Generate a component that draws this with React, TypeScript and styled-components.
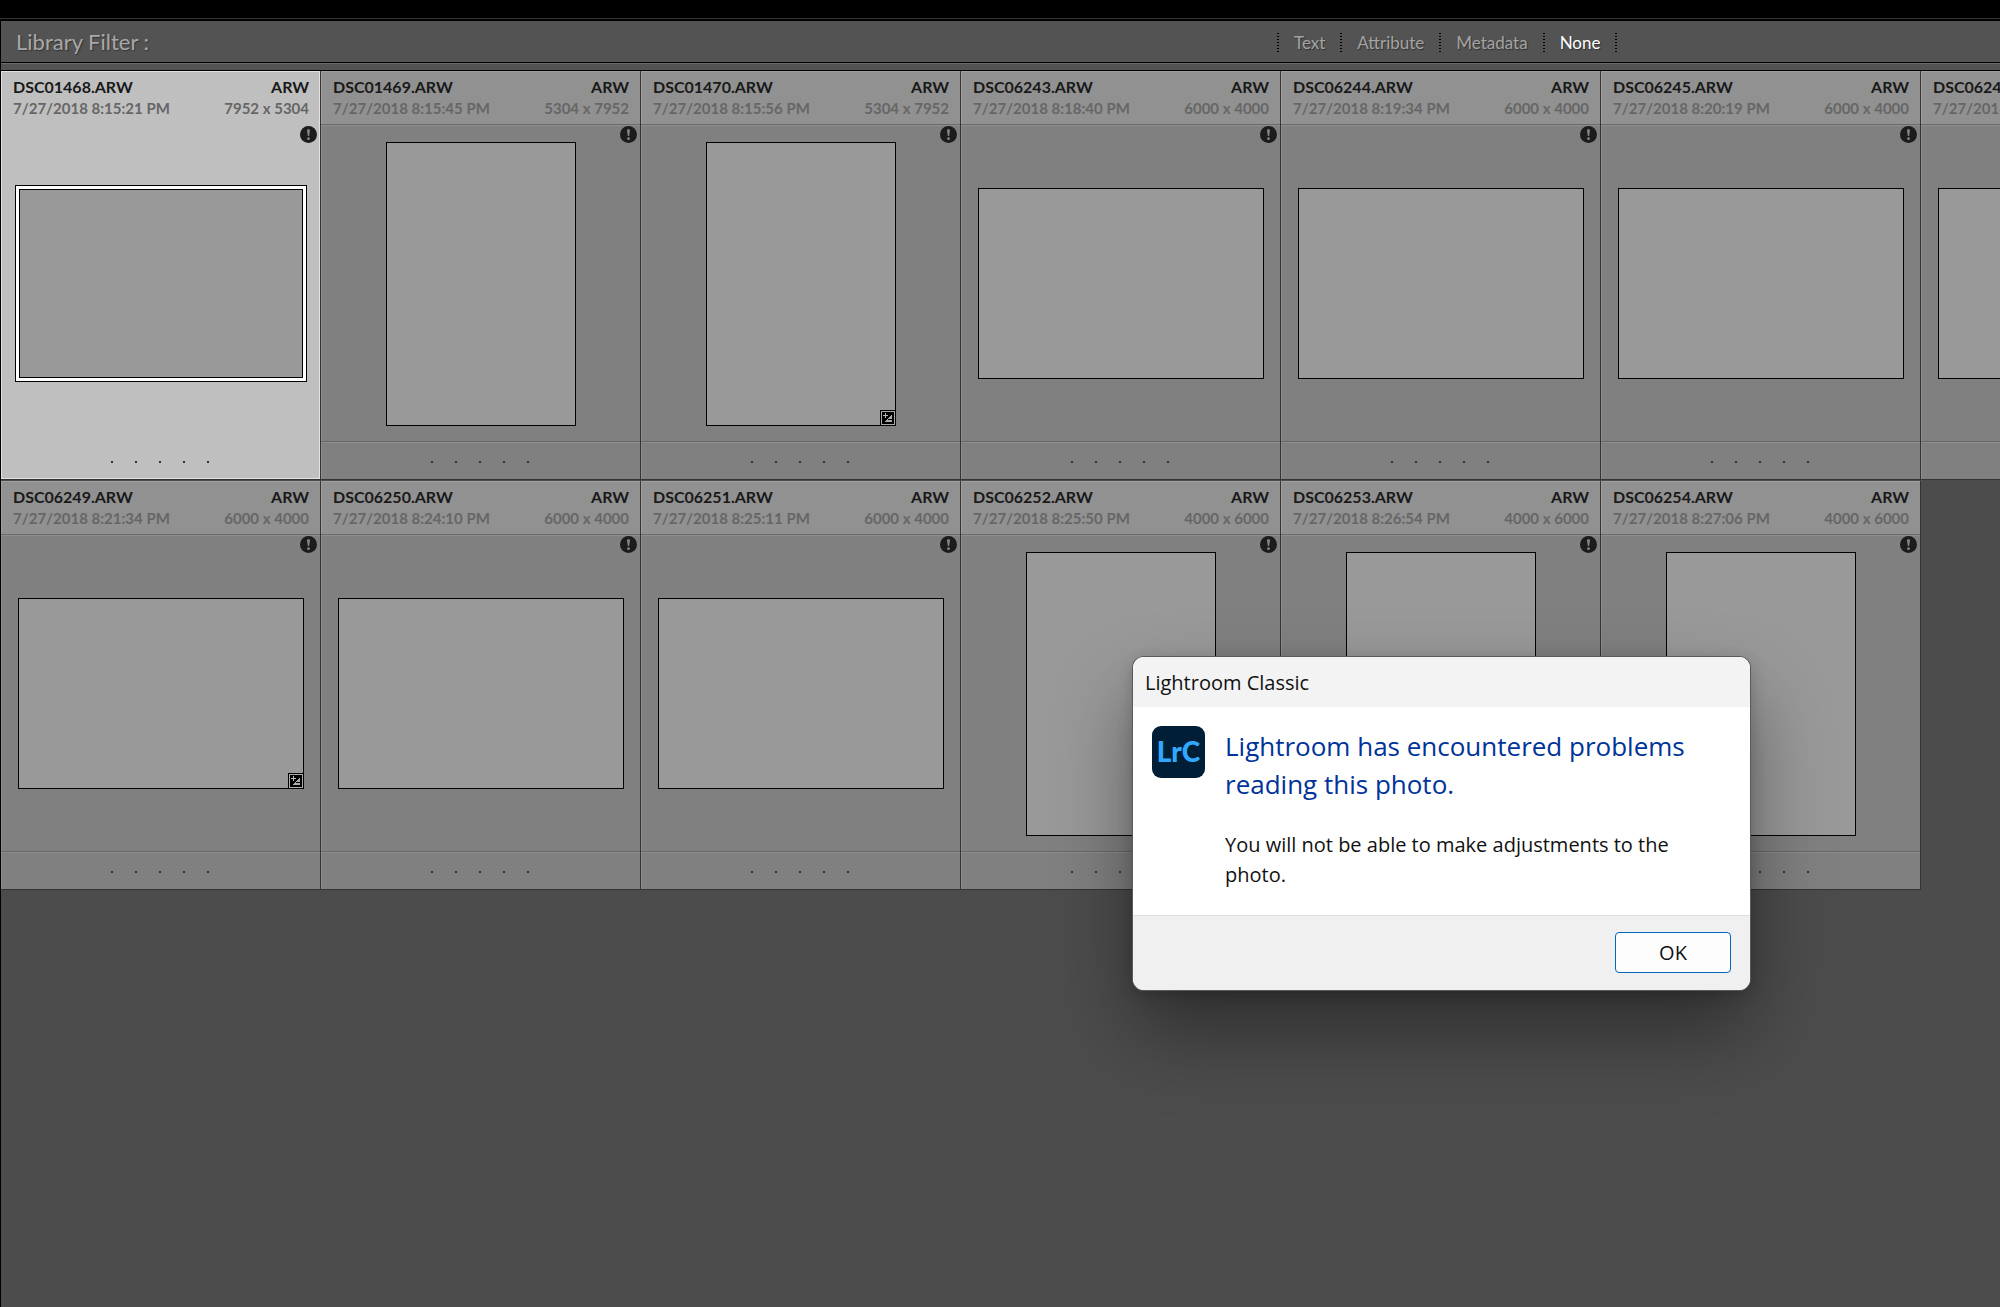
import React from "react";
import styled, { createGlobalStyle, css } from "styled-components";

const ui = `Lato, "Open Sans", sans-serif`;
const system = `"Open Sans", "Noto Sans", sans-serif`;

const GlobalStyle = createGlobalStyle`
  *, *::before, *::after { box-sizing: border-box; }
  html, body { margin: 0; background: #4c4c4c; }
  body { overflow: hidden; font-family: ${ui}; }
  h1, h2, p { margin: 0; font-weight: 400; }
`;

const Page = styled.div`
  position: relative;
  display: flex;
  flex-direction: column;
  min-height: 100vh;
  overflow: hidden;
`;

const TopStrip = styled.div`
  height: 21px;
  background: #000;
  border-bottom: 2px solid #000;
  box-shadow: inset 0 -1px 0 #333;
`;

const Workspace = styled.main`
  flex: 1;
  border-left: 1px solid #000;
`;

const FilterBar = styled.header`
  display: grid;
  grid-template-columns: 30fr 17fr;
  align-items: center;
  height: 42px;
  background: #535353;
  border-bottom: 1px solid #000;
`;

const FilterTitle = styled.h1`
  padding-left: 15px;
  font-size: 22px;
  line-height: 28px;
  color: #a8a8a8;
  text-shadow: 1px 1px 1px #333;
`;

const FilterTabs = styled.nav`
  display: flex;
  align-items: center;
  gap: 15px;
  padding-top: 2px;
`;

const Separator = styled.span`
  width: 2px;
  height: 19px;
  background: repeating-linear-gradient(#000 0 1px, transparent 1px 3px);
`;

const FilterTab = styled.button<{ $active?: boolean }>`
  padding: 0;
  border: 0;
  background: none;
  font-family: ${ui};
  font-size: 17px;
  line-height: 22px;
  color: ${(p) => (p.$active ? "#fff" : "#a3a3a3")};
  text-shadow: 1px 1px 1px #333;
`;

const BarEdge = styled.div`
  height: 8px;
  background: #535353;
  border-top: 1px solid #6b6b6b;
  border-bottom: 1px solid #000;
`;

const Grid = styled.section`
  display: grid;
  grid-template-columns: repeat(7, 320px);
  row-gap: 1px;
`;

const Cell = styled.article<{ $selected?: boolean }>`
  display: flex;
  flex-direction: column;
  height: 409px;
  background: #808080;
  border-right: 1px solid #333;
  border-bottom: 1px solid #333;
  box-shadow: inset 1px 0 0 #8e8e8e;
  ${(p) =>
    p.$selected &&
    css`
      background: #bfbfbf;
      box-shadow: inset 0 0 0 1px #e6e0e2;
    `}
`;

const CellHead = styled.div<{ $selected?: boolean }>`
  height: 54px;
  padding: 5px 11px 0 12px;
  border-bottom: 1px solid ${(p) => (p.$selected ? "transparent" : "#6a6a6a")};
  ${(p) =>
    !p.$selected &&
    css`
      background: #919191;
      box-shadow: inset 1px 1px 0 #9f9f9f;
    `}
`;

const Line = styled.div<{ $muted?: boolean }>`
  display: flex;
  justify-content: space-between;
  font-weight: 700;
  font-size: ${(p) => (p.$muted ? 15 : 16)}px;
  line-height: ${(p) => (p.$muted ? 22 : 21)}px;
  white-space: nowrap;
  color: ${(p) => (p.$muted ? "#666" : "#191919")};
`;

const CellBody = styled.div<{ $selected?: boolean }>`
  position: relative;
  flex: 1;
  display: flex;
  align-items: center;
  justify-content: center;
  padding-left: 1px;
  border-top: 1px solid ${(p) => (p.$selected ? "transparent" : "#8e8e8e")};
`;

const Thumb = styled.div<{ $portrait?: boolean; $selected?: boolean }>`
  position: relative;
  width: ${(p) => (p.$portrait ? 190 : 286)}px;
  height: ${(p) => (p.$portrait ? 284 : 191)}px;
  background: #999;
  border: 1px solid #000;
  ${(p) =>
    p.$selected &&
    css`
      border-color: #fff;
      box-shadow: inset 0 0 0 1px #000, 0 0 0 2px #fff, 0 0 0 3px #000;
    `}
`;

const AlertBadge = styled.svg`
  position: absolute;
  top: 0;
  right: 3px;
  width: 17px;
  height: 17px;
`;

const AdjustBadge = styled.svg`
  position: absolute;
  right: -1px;
  bottom: -1px;
  width: 16px;
  height: 16px;
`;

const CellFoot = styled.div<{ $selected?: boolean }>`
  display: flex;
  align-items: center;
  justify-content: center;
  gap: 22px;
  height: 38px;
  padding: 3px 2px 0 0;
  border-top: 1px solid ${(p) => (p.$selected ? "transparent" : "#686868")};
  box-shadow: ${(p) => (p.$selected ? "none" : "inset 0 1px 0 #8e8e8e")};
`;

const RatingDot = styled.span`
  width: 2px;
  height: 2px;
  background: #333;
`;

const Dialog = styled.div`
  position: absolute;
  top: 657px;
  left: 1133px;
  width: 617px;
  overflow: hidden;
  border-radius: 11px;
  background: #fff;
  box-shadow: 0 0 0 1px #5a5a5a, 0 4px 16px rgba(0, 0, 0, 0.2), 0 40px 80px rgba(0, 0, 0, 0.4);
  font-family: ${system};
  color: #111;
`;

const DialogTitle = styled.div`
  padding: 11px 12px 9px;
  background: #f3f3f3;
  font-size: 20px;
  line-height: 30px;
`;

const DialogContent = styled.div`
  display: flex;
  align-items: flex-start;
  gap: 20px;
  padding: 19px 40px 25px 19px;
`;

const DialogMessage = styled.div`
  padding-top: 1px;
`;

const AppIcon = styled.div`
  flex: none;
  width: 53px;
  height: 52px;
  border-radius: 9px;
  background: #001e36;
  color: #31a8ff;
  font-family: Lato, sans-serif;
  font-weight: 900;
  font-size: 28px;
  line-height: 50px;
  text-align: center;
`;

const DialogHeading = styled.h2`
  margin-bottom: 27px;
  font-size: 26px;
  line-height: 38px;
  color: #003399;
`;

const DialogText = styled.p`
  font-size: 20px;
  line-height: 30px;
`;

const DialogFooter = styled.div`
  display: flex;
  justify-content: flex-end;
  padding: 16px 19px 17px;
  background: #f0f0f0;
  border-top: 1px solid #dfdfdf;
`;

const OkButton = styled.button`
  width: 116px;
  height: 41px;
  padding: 0;
  border: 1px solid #0067c0;
  border-radius: 4px;
  background: #fdfdfd;
  font-family: ${system};
  font-size: 20px;
  color: #111;
`;

type Photo = {
  name: string;
  time: string;
  size: string;
  portrait?: boolean;
  adjusted?: boolean;
  selected?: boolean;
};

const photos: Photo[] = [
  { name: "DSC01468", time: "8:15:21", size: "7952 x 5304", selected: true },
  { name: "DSC01469", time: "8:15:45", size: "5304 x 7952", portrait: true },
  { name: "DSC01470", time: "8:15:56", size: "5304 x 7952", portrait: true, adjusted: true },
  { name: "DSC06243", time: "8:18:40", size: "6000 x 4000" },
  { name: "DSC06244", time: "8:19:34", size: "6000 x 4000" },
  { name: "DSC06245", time: "8:20:19", size: "6000 x 4000" },
  { name: "DSC06246", time: "8:20:48", size: "6000 x 4000" },
  { name: "DSC06249", time: "8:21:34", size: "6000 x 4000", adjusted: true },
  { name: "DSC06250", time: "8:24:10", size: "6000 x 4000" },
  { name: "DSC06251", time: "8:25:11", size: "6000 x 4000" },
  { name: "DSC06252", time: "8:25:50", size: "4000 x 6000", portrait: true },
  { name: "DSC06253", time: "8:26:54", size: "4000 x 6000", portrait: true },
  { name: "DSC06254", time: "8:27:06", size: "4000 x 6000", portrait: true },
];

const filters = ["Text", "Attribute", "Metadata", "None"];

function PhotoCell({ photo }: { photo: Photo }) {
  const { name, time, size, portrait, adjusted, selected } = photo;
  return (
    <Cell $selected={selected}>
      <CellHead $selected={selected}>
        <Line>
          <span>{name}.ARW</span>
          <span>ARW</span>
        </Line>
        <Line $muted>
          <span>7/27/2018 {time} PM</span>
          <span>{size}</span>
        </Line>
      </CellHead>
      <CellBody $selected={selected}>
        <AlertBadge viewBox="0 0 17 17" aria-hidden="true">
          <circle cx="8.5" cy="8.5" r="8.5" fill="#1c1c1c" />
          <path d="M7 4.5a1.5 1.5 0 0 1 3 0L9.2 10H7.8z" fill="#858585" />
          <circle cx="8.5" cy="12.7" r="1.4" fill="#858585" />
        </AlertBadge>
        <Thumb $portrait={portrait} $selected={selected}>
          {adjusted && (
            <AdjustBadge viewBox="0 0 16 16" shapeRendering="crispEdges" aria-hidden="true">
              <rect width="16" height="16" fill="#000" />
              <rect x="1" y="1" width="14" height="14" fill="#aaa" />
              <rect x="2" y="2" width="12" height="12" fill="#000" />
              <path d="M3 5h5v1H3zM5 3h1v5H5z" fill="#bbb" />
              <path d="M12 4v8H4z" fill="#aaa" />
              <rect x="8" y="9" width="4" height="1" fill="#000" />
            </AdjustBadge>
          )}
        </Thumb>
      </CellBody>
      <CellFoot $selected={selected}>
        {[1, 2, 3, 4, 5].map((n) => (
          <RatingDot key={n} />
        ))}
      </CellFoot>
    </Cell>
  );
}

export default function App() {
  return (
    <Page>
      <GlobalStyle />
      <TopStrip />
      <Workspace>
        <FilterBar>
          <FilterTitle>Library Filter :</FilterTitle>
          <FilterTabs>
            <Separator />
            {filters.map((f) => (
              <React.Fragment key={f}>
                <FilterTab type="button" $active={f === "None"}>
                  {f}
                </FilterTab>
                <Separator />
              </React.Fragment>
            ))}
          </FilterTabs>
        </FilterBar>
        <BarEdge />
        <Grid>
          {photos.map((p) => (
            <PhotoCell key={p.name} photo={p} />
          ))}
        </Grid>
      </Workspace>
      <Dialog role="dialog" aria-labelledby="dialog-title">
        <DialogTitle id="dialog-title">Lightroom Classic</DialogTitle>
        <DialogContent>
          <AppIcon>LrC</AppIcon>
          <DialogMessage>
            <DialogHeading>Lightroom has encountered problems reading this photo.</DialogHeading>
            <DialogText>You will not be able to make adjustments to the photo.</DialogText>
          </DialogMessage>
        </DialogContent>
        <DialogFooter>
          <OkButton type="button">OK</OkButton>
        </DialogFooter>
      </Dialog>
    </Page>
  );
}
